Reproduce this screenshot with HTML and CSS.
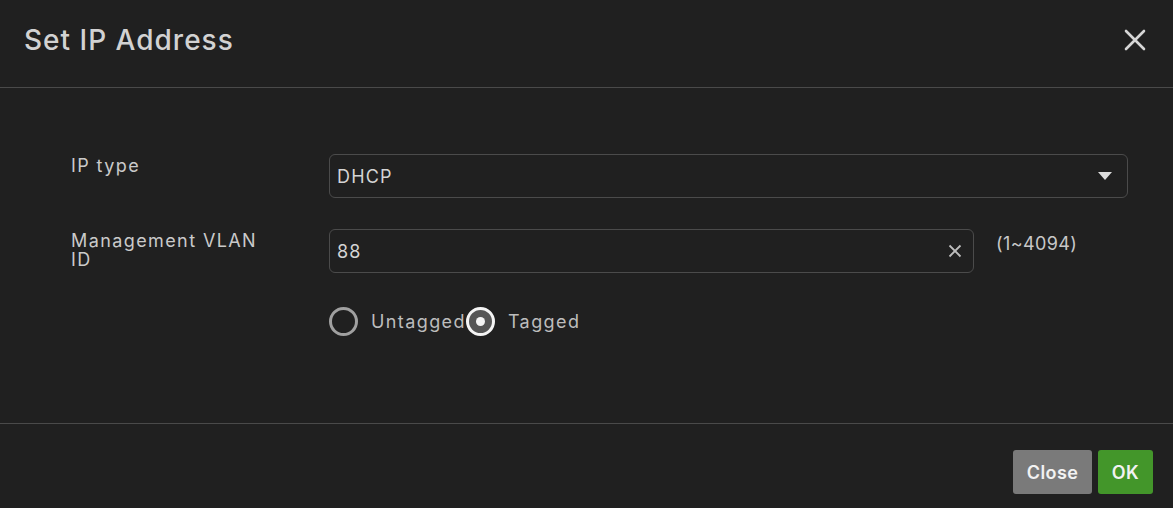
FILE: index.html
```html
<!DOCTYPE html>
<html lang="en">
<head>
    <meta charset="UTF-8">
    <meta name="viewport" content="width=device-width, initial-scale=1.0">
    <title>Set IP Address</title>
    <link rel="stylesheet" href="styles.css">
</head>
<body>
    <div class="dialog">
        <div class="dialog-header">
            <h2>Set IP Address</h2>
            <button class="icon-btn" type="button" aria-label="Close">
                <svg width="22" height="22" viewBox="0 0 22 22"><path d="M2 2L20 20M20 2L2 20" stroke="#d6d6d6" stroke-width="2.6" stroke-linecap="round"/></svg>
            </button>
        </div>

        <div class="dialog-body">
            <div class="form-row">
                <label class="form-label">IP type</label>
                <div class="field select-field">
                    <span>DHCP</span>
                    <svg width="14" height="8" viewBox="0 0 14 8"><path d="M0 0H14L7 8Z" fill="#dcdcdc"/></svg>
                </div>
            </div>

            <div class="form-row">
                <label class="form-label">Management VLAN ID</label>
                <div class="field-line">
                    <div class="field input-field">
                        <span>88</span>
                        <svg width="14" height="14" viewBox="0 0 14 14"><path d="M1.5 1.5L12.5 12.5M12.5 1.5L1.5 12.5" stroke="#bdbdbd" stroke-width="1.8"/></svg>
                    </div>
                    <span class="hint">(1~4094)</span>
                </div>
            </div>

            <div class="form-row">
                <span></span>
                <div class="radio-group">
                    <label class="radio"><span class="radio-dot"></span>Untagged</label>
                    <label class="radio checked"><span class="radio-dot"></span>Tagged</label>
                </div>
            </div>
        </div>

        <div class="dialog-footer">
            <button class="btn btn-grey" type="button">Close</button>
            <button class="btn btn-green" type="button">OK</button>
        </div>
    </div>
</body>
</html>
```

FILE: styles.css
```css
body { margin: 0; background: #202020; font-family: Inter, "Noto Sans", sans-serif; color: #cfcfcf; }
.dialog { width: 1173px; height: 508px; background: #202020; }
.dialog-header { height: 88px; border-bottom: 1px solid #4a4a4a; display: flex; align-items: center; justify-content: space-between; padding: 0 27px 8px 24px; box-sizing: border-box; }
.dialog-header h2 { margin: 0; font-size: 28px; font-weight: 500; color: #d2d2d2; letter-spacing: 1px; }
.icon-btn { background: none; border: none; padding: 0; display: flex; cursor: pointer; }
.dialog-body { height: 336px; border-bottom: 1px solid #4a4a4a; padding: 66px 45px 0 71px; box-sizing: border-box; display: flex; flex-direction: column; gap: 31px; }
.form-row { display: grid; grid-template-columns: 200px 1fr; column-gap: 58px; align-items: start; }
.form-label { font-size: 18px; line-height: 19px; padding-top: 2px; color: #cacaca; letter-spacing: 1.4px; }
.field { height: 44px; box-sizing: border-box; border: 1px solid #4b4b4b; border-radius: 6px; display: flex; align-items: center; justify-content: space-between; padding: 0 14px 0 7px; font-size: 18px; letter-spacing: 1.2px; color: #d4d4d4; }
.select-field { padding-right: 15px; }
.field-line { display: flex; align-items: flex-start; }
.input-field { width: 645px; padding-right: 11px; }
.hint { margin-left: 22px; margin-top: 4px; font-size: 18px; letter-spacing: 0.4px; color: #c8c8c8; }
.radio-group { display: flex; margin-top: 3px; }
.radio { display: flex; align-items: center; font-size: 18px; letter-spacing: 1.4px; color: #bdbdbd; }
.radio-dot { width: 29px; height: 29px; box-sizing: border-box; border-radius: 50%; border: 3px solid #a0a0a0; margin-right: 13px; display: flex; align-items: center; justify-content: center; }
.radio.checked .radio-dot { border-color: #f4f4f4; background: #555; }
.radio.checked .radio-dot::after { content: ""; width: 9px; height: 9px; border-radius: 50%; background: #f4f4f4; }
.dialog-footer { display: flex; justify-content: flex-end; gap: 6px; padding: 26px 20px 0 0; }
.btn { height: 44px; border: none; border-radius: 3px; font-family: inherit; font-size: 18px; font-weight: 600; color: #f2f2f2; padding: 0; letter-spacing: 0.4px; }
.btn-grey { background: #7a7a7a; width: 79px; }
.btn-green { background: #43962a; width: 55px; }
```
